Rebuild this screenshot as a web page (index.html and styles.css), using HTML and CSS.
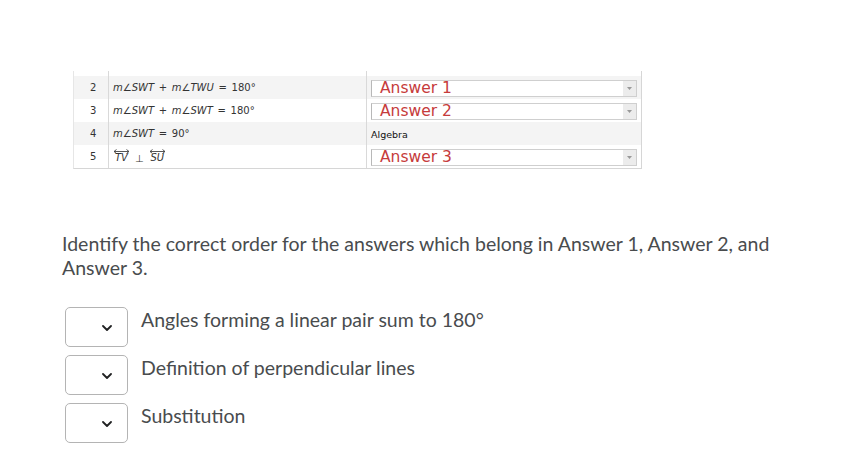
FILE: index.html
```
<!DOCTYPE html>
<html>
<head>
<meta charset="utf-8">
<link rel="stylesheet" href="styles.css">
</head>
<body>
<div class="page">
  <div class="qtable">
    <div class="row row-top"><div class="c1"></div><div class="c2"></div><div class="c3"></div></div>
    <div class="row alt">
      <div class="c1">2</div>
      <div class="c2 math">m∠SWT + m∠TWU = <span class="num">180°</span></div>
      <div class="c3"><div class="sel"><span class="sel-text">Answer 1</span><span class="sel-btn"><svg width="5" height="3" viewBox="0 0 5 3"><path d="M0 0H5L2.5 3Z" fill="#999"/></svg></span></div></div>
    </div>
    <div class="row">
      <div class="c1">3</div>
      <div class="c2 math">m∠SWT + m∠SWT = <span class="num">180°</span></div>
      <div class="c3"><div class="sel"><span class="sel-text">Answer 2</span><span class="sel-btn"><svg width="5" height="3" viewBox="0 0 5 3"><path d="M0 0H5L2.5 3Z" fill="#999"/></svg></span></div></div>
    </div>
    <div class="row alt">
      <div class="c1">4</div>
      <div class="c2 math">m∠SWT = <span class="num">90°</span></div>
      <div class="c3 plain">Algebra</div>
    </div>
    <div class="row">
      <div class="c1">5</div>
      <div class="c2 math">
        <span class="ray"><svg class="arr" width="17" height="5" viewBox="0 0 17 5"><path d="M1 2.5H16M1 2.5L3.5 0.5M1 2.5L3.5 4.5M16 2.5L13.5 0.5M16 2.5L13.5 4.5" stroke="#444" stroke-width="0.9" fill="none"/></svg><span>TV</span></span>
        <span class="perp">⊥</span>
        <span class="ray"><svg class="arr" width="17" height="5" viewBox="0 0 17 5"><path d="M1 2.5H16M1 2.5L3.5 0.5M1 2.5L3.5 4.5M16 2.5L13.5 0.5M16 2.5L13.5 4.5" stroke="#444" stroke-width="0.9" fill="none"/></svg><span>SU</span></span>
      </div>
      <div class="c3"><div class="sel"><span class="sel-text">Answer 3</span><span class="sel-btn"><svg width="5" height="3" viewBox="0 0 5 3"><path d="M0 0H5L2.5 3Z" fill="#999"/></svg></span></div></div>
    </div>
  </div>

  <p class="question">Identify the correct order for the answers which belong in Answer 1, Answer 2, and Answer 3.</p>

  <div class="choices">
    <div class="choice">
      <div class="dd"><svg width="10" height="6" viewBox="0 0 10 6"><path d="M1 1L5 5L9 1" stroke="#202122" stroke-width="1.8" fill="none" stroke-linecap="round" stroke-linejoin="round"/></svg></div>
      <div class="label">Angles forming a linear pair sum to 180°</div>
    </div>
    <div class="choice">
      <div class="dd"><svg width="10" height="6" viewBox="0 0 10 6"><path d="M1 1L5 5L9 1" stroke="#202122" stroke-width="1.8" fill="none" stroke-linecap="round" stroke-linejoin="round"/></svg></div>
      <div class="label">Definition of perpendicular lines</div>
    </div>
    <div class="choice">
      <div class="dd"><svg width="10" height="6" viewBox="0 0 10 6"><path d="M1 1L5 5L9 1" stroke="#202122" stroke-width="1.8" fill="none" stroke-linecap="round" stroke-linejoin="round"/></svg></div>
      <div class="label">Substitution</div>
    </div>
  </div>
</div>
</body>
</html>
```

FILE: styles.css
```
html, body {
  margin: 0;
  padding: 0;
  background: #ffffff;
}

.page {
  padding-top: 71px;
  width: 867px;
  height: 452px;
  box-sizing: border-box;
  overflow: hidden;
}

.qtable {
  margin-left: 73px;
  width: 569px;
  border-left: 1px solid #e6e6e6;
  border-right: 1px solid #d6d6d6;
  border-bottom: 1px solid #d6d6d6;
  box-sizing: border-box;
  font-family: "DejaVu Sans", Verdana, sans-serif;
  font-size: 10px;
  color: #333;
}

.row {
  display: grid;
  grid-template-columns: 34px 258px 275px;
  height: 23px;
}

.row-top {
  height: 5px;
}

.row.alt {
  background: #f4f4f4;
}

.c1 {
  display: flex;
  align-items: center;
  padding-left: 16px;
}

.c2 {
  border-left: 1px solid #d9d9d9;
  display: flex;
  align-items: center;
  padding-left: 4px;
  white-space: pre;
}

.c3 {
  border-left: 1px solid #d9d9d9;
  display: flex;
  align-items: center;
  padding-left: 4px;
  padding-right: 4px;
}

.c3.plain {
  color: #111;
  font-size: 9.5px;
  padding-top: 2px;
}

.math {
  font-style: italic;
  word-spacing: 1.5px;
}

.num {
  font-style: normal;
}

.ray {
  display: inline-flex;
  flex-direction: column;
  align-items: center;
  line-height: 10px;
  margin-top: -2px;
}

.arr {
  display: block;
  margin-bottom: -1px;
}

.perp {
  font-style: normal;
  margin: 4px 5px 0 5px;
}

.sel {
  flex: 1;
  height: 15px;
  border: 1px solid #cfcfcf;
  border-left-color: #b8b8b8;
  background: #fff;
  display: flex;
  align-items: center;
  margin-top: 2px;
}

.sel-text {
  flex: 1;
  color: #c63b3b;
  font-family: "DejaVu Sans", Verdana, sans-serif;
  font-size: 15.5px;
  line-height: 15px;
  padding-left: 8px;
  white-space: nowrap;
}

.sel-btn {
  width: 13px;
  height: 15px;
  background: #ececec;
  display: flex;
  align-items: center;
  justify-content: center;
}

.question {
  margin: 63px 0 0 62px;
  width: 725px;
  font-family: Lato, "Open Sans", sans-serif;
  font-size: 19.5px;
  line-height: 24px;
  color: #494c4e;
}

.choices {
  margin: 27px 0 0 65px;
  display: flex;
  flex-direction: column;
  gap: 8px;
}

.choice {
  display: flex;
  align-items: flex-start;
  gap: 13px;
}

.dd {
  width: 63px;
  height: 40px;
  box-sizing: border-box;
  border: 1px solid #b4b4b4;
  border-radius: 5px;
  background: #fff;
  display: flex;
  align-items: center;
  justify-content: flex-end;
  padding-right: 15px;
}

.dd svg {
  margin-top: 1px;
}

.label {
  padding-top: 1px;
  font-family: Lato, "Open Sans", sans-serif;
  font-size: 19.5px;
  line-height: 24px;
  color: #494c4e;
}
```
